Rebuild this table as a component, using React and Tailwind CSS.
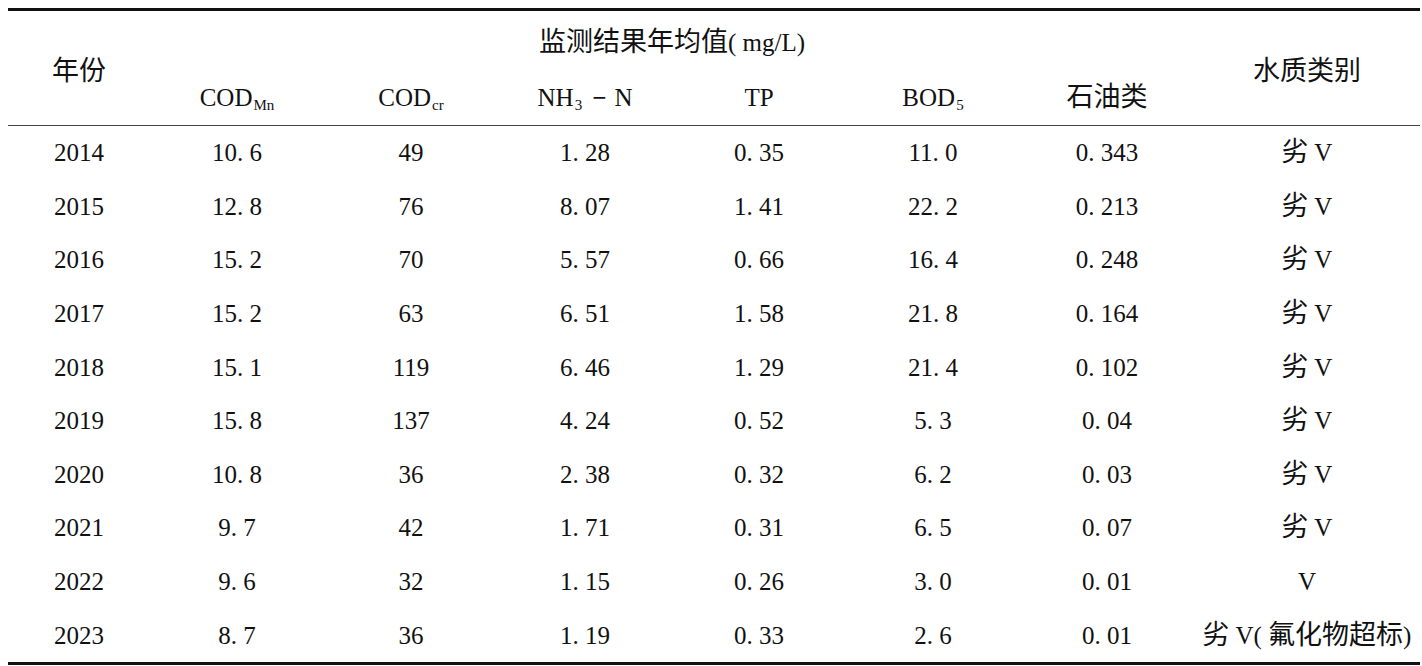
const rows = [
  ["2014", "10. 6", "49", "1. 28", "0. 35", "11. 0", "0. 343", "劣 V"],
  ["2015", "12. 8", "76", "8. 07", "1. 41", "22. 2", "0. 213", "劣 V"],
  ["2016", "15. 2", "70", "5. 57", "0. 66", "16. 4", "0. 248", "劣 V"],
  ["2017", "15. 2", "63", "6. 51", "1. 58", "21. 8", "0. 164", "劣 V"],
  ["2018", "15. 1", "119", "6. 46", "1. 29", "21. 4", "0. 102", "劣 V"],
  ["2019", "15. 8", "137", "4. 24", "0. 52", "5. 3", "0. 04", "劣 V"],
  ["2020", "10. 8", "36", "2. 38", "0. 32", "6. 2", "0. 03", "劣 V"],
  ["2021", "9. 7", "42", "1. 71", "0. 31", "6. 5", "0. 07", "劣 V"],
  ["2022", "9. 6", "32", "1. 15", "0. 26", "3. 0", "0. 01", "V"],
  ["2023", "8. 7", "36", "1. 19", "0. 33", "2. 6", "0. 01", "劣 V( 氟化物超标)"],
];

const font = {
  fontFamily: '"Liberation Serif", "Noto Sans CJK SC", serif',
};

function Mixed({ text }) {
  const parts = text.split(/([\u4e00-\u9fff]+)/).filter((p) => p !== "");
  return (
    <>
      {parts.map((p, i) =>
        /[\u4e00-\u9fff]/.test(p) ? (
          <span key={i} className="text-[27px]">
            {p}
          </span>
        ) : (
          <span key={i}>{p}</span>
        )
      )}
    </>
  );
}

function Sub({ children }) {
  return (
    <span className="text-[15px] relative top-[8px] ml-[1px]">{children}</span>
  );
}

export default function App() {
  return (
    <div
      className="w-[1422px] h-[666px] bg-white text-[#111] text-[25px] leading-none pt-[8px] pl-[8px]"
      style={font}
    >
      <div className="w-[1412px] border-t-[3px] border-b-[3px] border-[#111]">
        <div className="grid grid-cols-[142px_repeat(6,174px)_226px] grid-rows-[62px_52px] border-b-[1.5px] border-[#444]">
          <div className="row-span-2 col-start-1 row-start-1 flex items-center justify-center pt-[6px]">
            <Mixed text="年份" />
          </div>
          <div className="col-start-2 col-span-6 row-start-1 flex items-center justify-center">
            <Mixed text="监测结果年均值( mg/L)" />
          </div>
          <div className="row-span-2 col-start-8 row-start-1 flex items-center justify-center pt-[6px]">
            <Mixed text="水质类别" />
          </div>
          <div className="row-start-2 col-start-2 flex items-center justify-center pb-[4px]">
            COD<Sub>Mn</Sub>
          </div>
          <div className="row-start-2 col-start-3 flex items-center justify-center pb-[4px]">
            COD<Sub>cr</Sub>
          </div>
          <div className="row-start-2 col-start-4 flex items-center justify-center pb-[4px]">
            NH<Sub>3</Sub>
            <span className="ml-[10px] mr-[8px] font-bold">−</span>N
          </div>
          <div className="row-start-2 col-start-5 flex items-center justify-center pb-[4px]">
            TP
          </div>
          <div className="row-start-2 col-start-6 flex items-center justify-center pb-[4px]">
            BOD<Sub>5</Sub>
          </div>
          <div className="row-start-2 col-start-7 flex items-center justify-center pb-[4px]">
            <Mixed text="石油类" />
          </div>
        </div>
        {rows.map((r) => (
          <div
            key={r[0]}
            className="grid grid-cols-[142px_repeat(6,174px)_226px] h-[53.6px]"
          >
            {r.map((c, i) => (
              <div
                key={i}
                className="flex items-center justify-center whitespace-pre"
              >
                <Mixed text={c} />
              </div>
            ))}
          </div>
        ))}
      </div>
    </div>
  );
}
